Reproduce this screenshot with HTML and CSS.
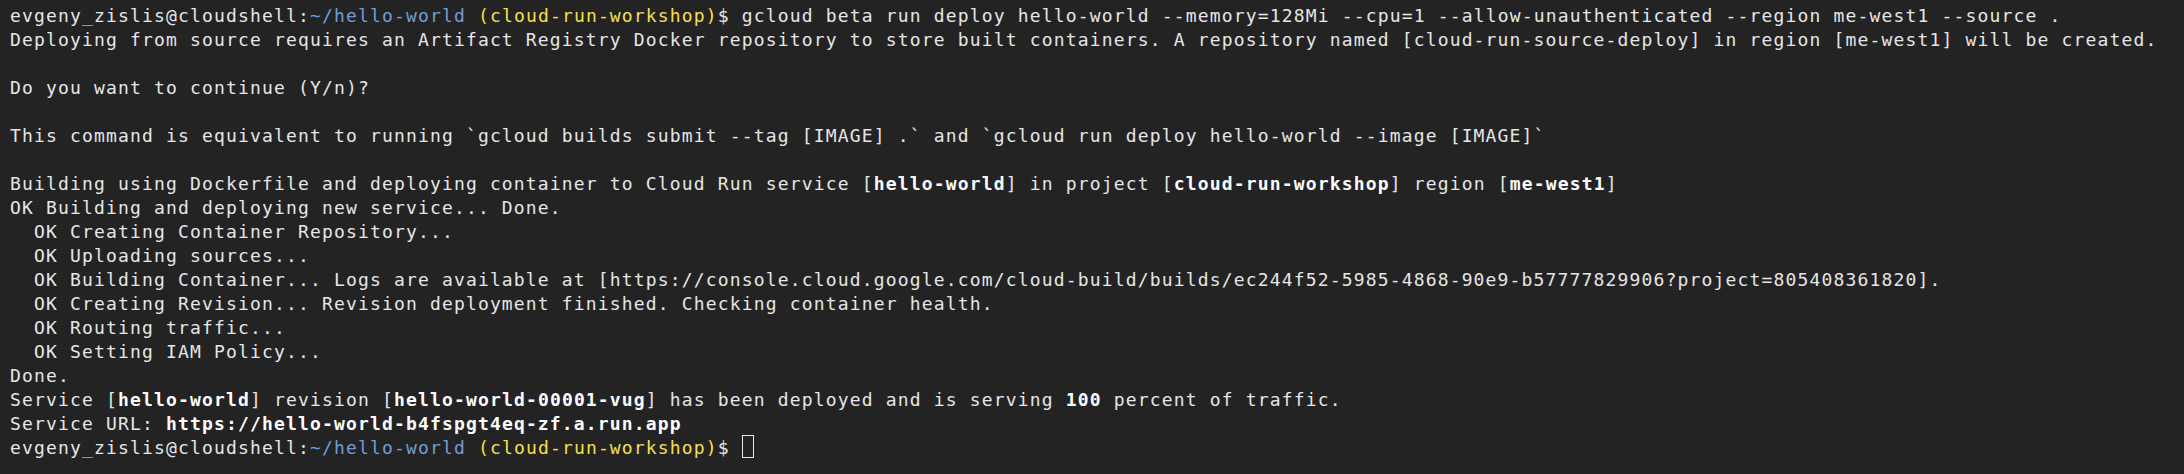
FILE: index.html
```html
<!DOCTYPE html>
<html>
<head>
<meta charset="utf-8">
<link rel="stylesheet" href="styles.css">
</head>
<body>
<div class="term">
<div class="ln"><span class="user">evgeny_zislis@cloudshell:</span><span class="path">~/hello-world</span> <span class="proj">(cloud-run-workshop)</span>$ gcloud beta run deploy hello-world --memory=128Mi --cpu=1 --allow-unauthenticated --region me-west1 --source .</div>
<div class="ln">Deploying from source requires an Artifact Registry Docker repository to store built containers. A repository named [cloud-run-source-deploy] in region [me-west1] will be created.</div>
<div class="ln"></div>
<div class="ln">Do you want to continue (Y/n)?</div>
<div class="ln"></div>
<div class="ln">This command is equivalent to running `gcloud builds submit --tag [IMAGE] .` and `gcloud run deploy hello-world --image [IMAGE]`</div>
<div class="ln"></div>
<div class="ln">Building using Dockerfile and deploying container to Cloud Run service [<b>hello-world</b>] in project [<b>cloud-run-workshop</b>] region [<b>me-west1</b>]</div>
<div class="ln">OK Building and deploying new service... Done.</div>
<div class="ln">  OK Creating Container Repository...</div>
<div class="ln">  OK Uploading sources...</div>
<div class="ln">  OK Building Container... Logs are available at [https://console.cloud.google.com/cloud-build/builds/ec244f52-5985-4868-90e9-b57777829906?project=805408361820].</div>
<div class="ln">  OK Creating Revision... Revision deployment finished. Checking container health.</div>
<div class="ln">  OK Routing traffic...</div>
<div class="ln">  OK Setting IAM Policy...</div>
<div class="ln">Done.</div>
<div class="ln">Service [<b>hello-world</b>] revision [<b>hello-world-00001-vug</b>] has been deployed and is serving <b>100</b> percent of traffic.</div>
<div class="ln">Service URL: <b>https://hello-world-b4fspgt4eq-zf.a.run.app</b></div>
<div class="ln"><span class="user">evgeny_zislis@cloudshell:</span><span class="path">~/hello-world</span> <span class="proj">(cloud-run-workshop)</span>$ <span class="cursor"></span></div>
</div>
</body>
</html>
```
FILE: styles.css
```css
html, body {
  margin: 0;
  padding: 0;
  background: #232323;
}
.term {
  box-sizing: border-box;
  width: 2184px;
  height: 474px;
  padding: 4px 10px 0 10px;
  font-family: "DejaVu Sans Mono", "Liberation Mono", monospace;
  font-size: 18px;
  letter-spacing: 1.16px;
  line-height: 24px;
  color: #e6e6e6;
  background: #232323;
  overflow: hidden;
}
.ln {
  height: 24px;
  white-space: pre;
}
.ln b {
  font-weight: bold;
  color: #ffffff;
}
.path {
  color: #6f9fd6;
}
.proj {
  color: #f6e048;
}
.cursor {
  display: inline-block;
  box-sizing: border-box;
  width: 12px;
  height: 23px;
  border: 1px solid #e6e6e6;
  vertical-align: top;
  margin-top: -1px;
}
```
